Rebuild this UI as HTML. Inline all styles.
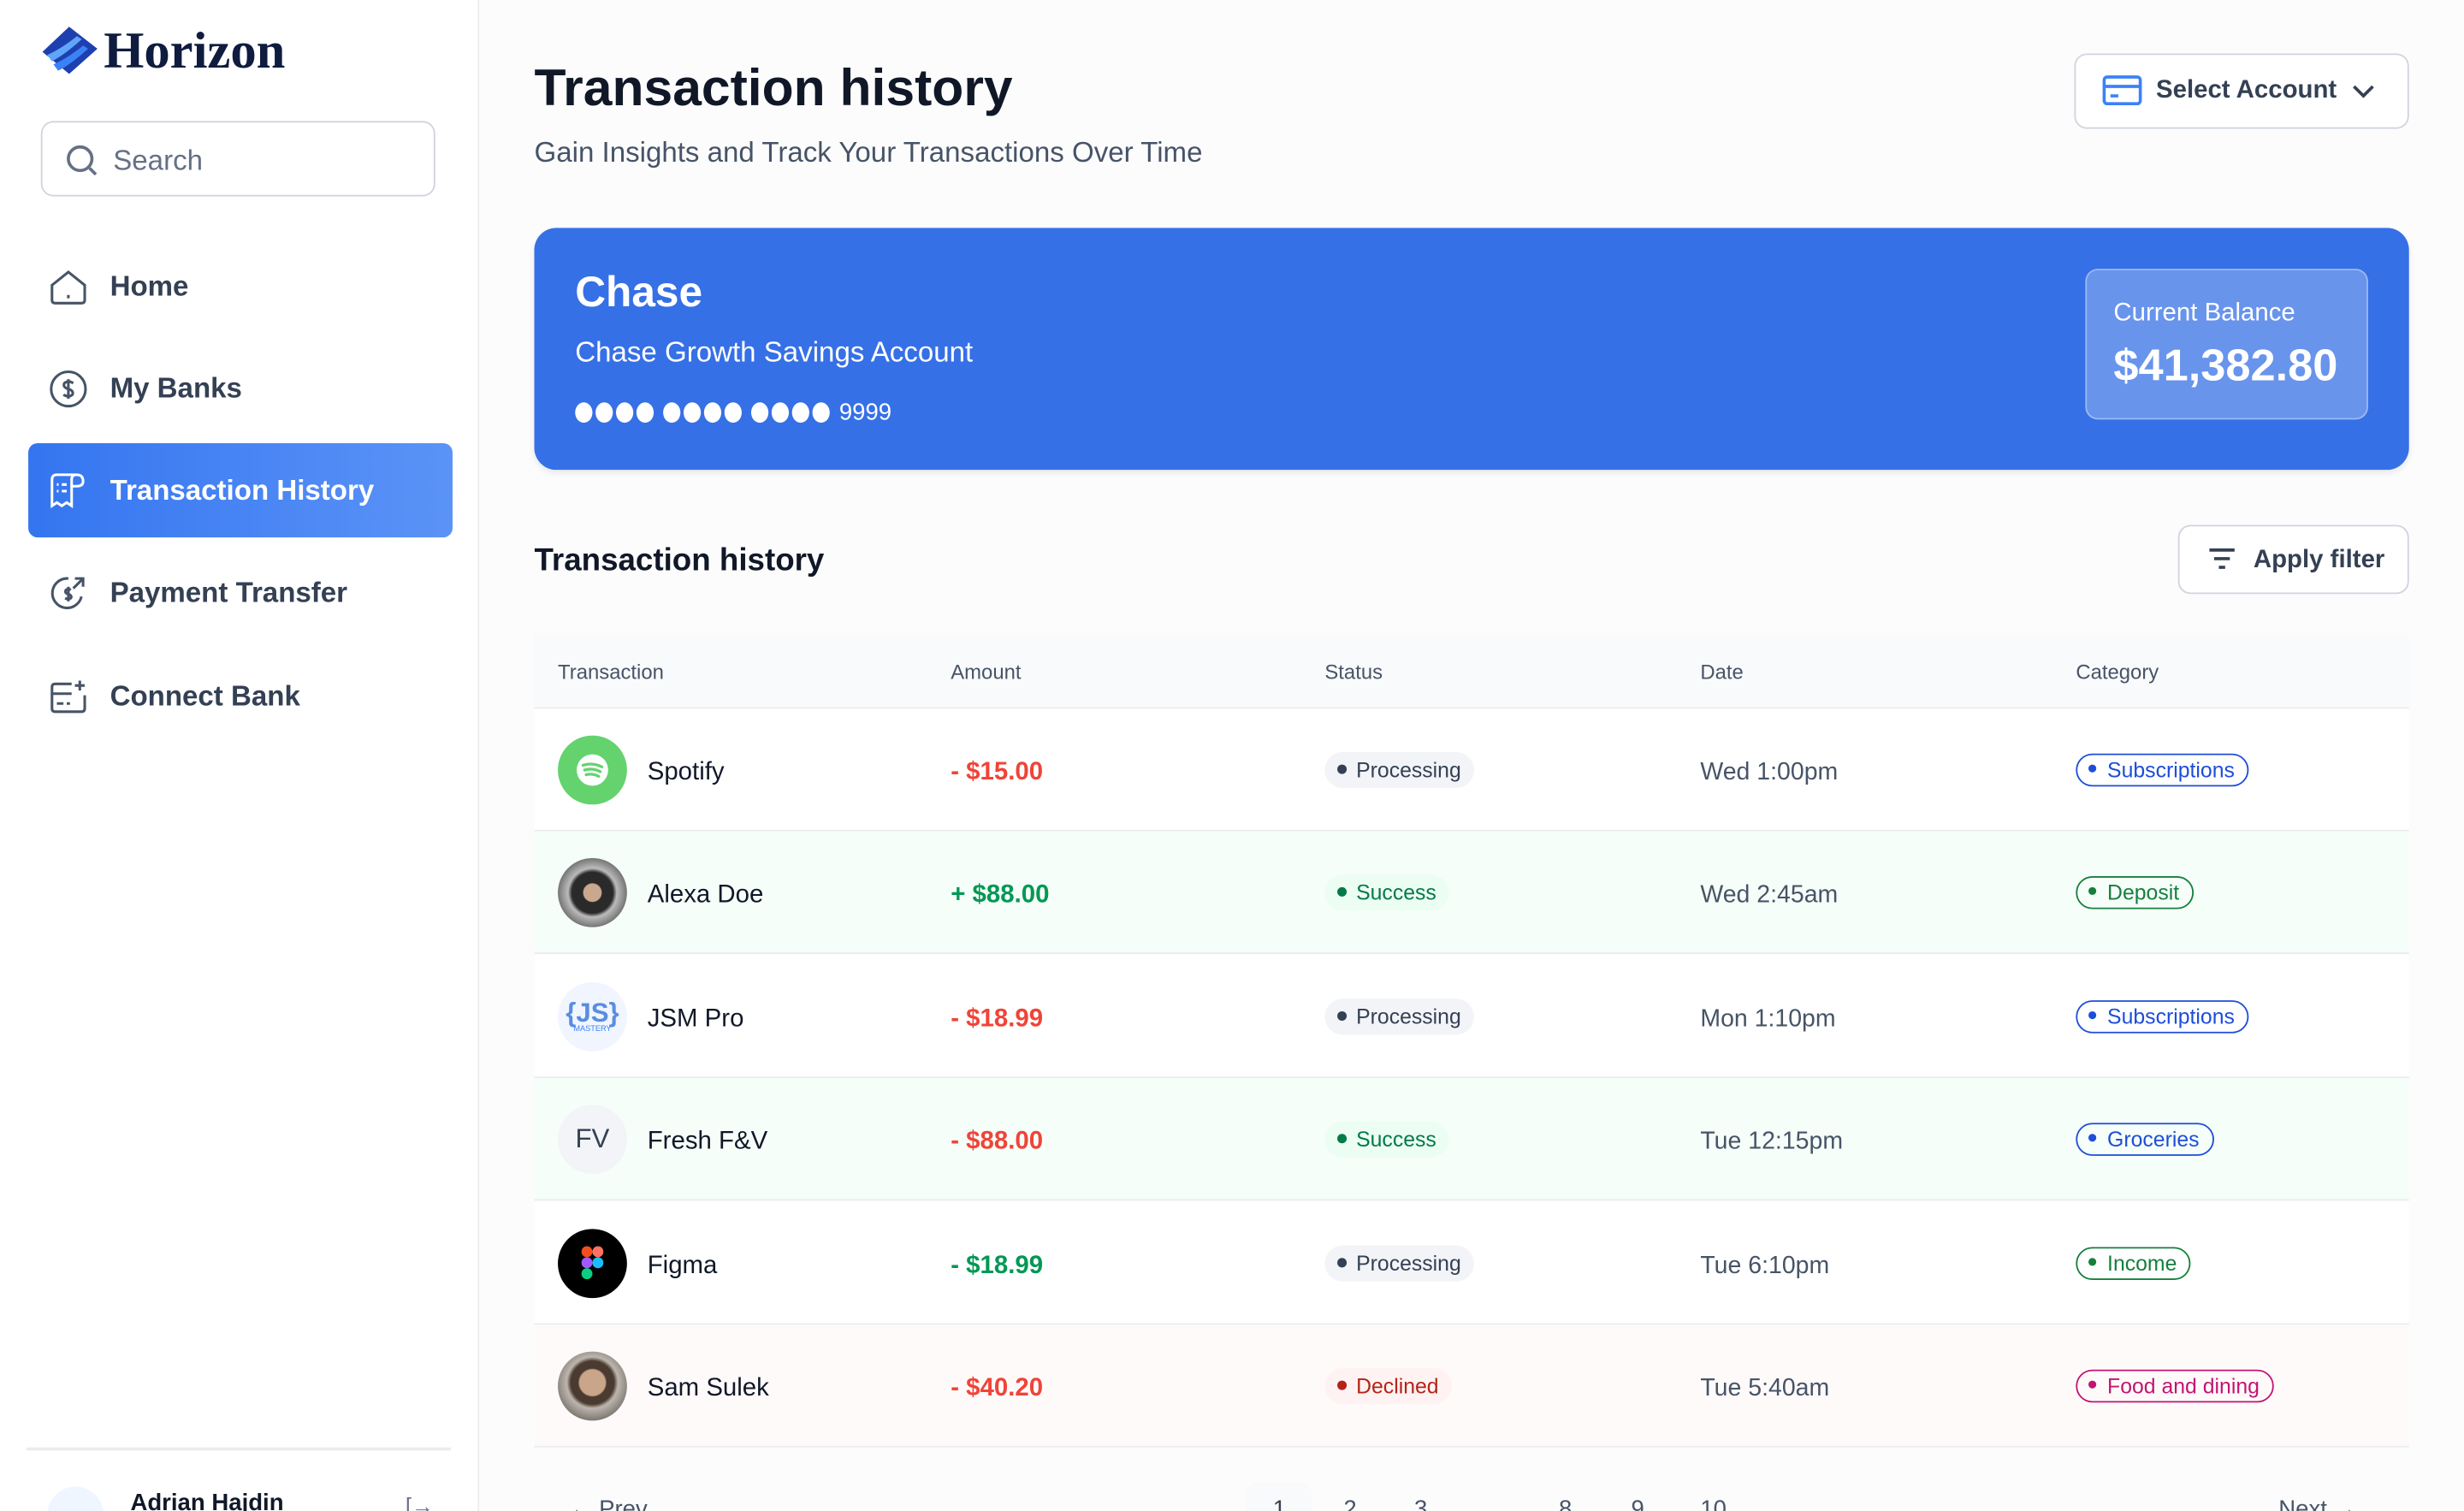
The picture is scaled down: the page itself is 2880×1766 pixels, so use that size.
<!DOCTYPE html>
<html><head><meta charset="utf-8"><style>
*{box-sizing:border-box;margin:0;padding:0}
html,body{width:2880px;height:1766px;overflow:hidden;background:#fcfcfd}
#w{width:1568px;height:962px;transform:scale(1.836735);transform-origin:0 0;position:relative;font-family:"Liberation Sans",sans-serif;color:#101828;background:#fcfcfd}
.abs{position:absolute}
.side{left:0;top:0;width:305px;height:962px;background:#fff;border-right:1px solid #eaecf0}
.nav{position:absolute;left:18px;width:270px;height:60px;display:flex;align-items:center;padding-left:13px;font-size:18px;font-weight:bold;color:#344054}
.nav svg{margin-right:14px}
.th{position:absolute;top:420px;font-size:13px;color:#475467}
.row{position:absolute;left:340px;width:1193px;height:78px;border-bottom:1.5px solid #eaecf0}
.row>*{position:absolute;top:50%;transform:translateY(-50%)}
.row>.nm,.row>.am,.row>.dt{margin-top:2px}
.av{left:15px;width:44px;height:44px;border-radius:50%;display:flex;align-items:center;justify-content:center}
.nm{left:72px;font-size:16px;color:#101828}
.am{left:265px;font-size:16px;font-weight:bold}
.st{left:503px;font-size:13.5px;padding:4px 8px 4px 20px;border-radius:12px}
.st:before{content:"";position:absolute;left:8px;top:50%;margin-top:-3px;width:6px;height:6px;border-radius:50%;background:currentColor}
.dt{left:742px;font-size:15.5px;color:#475467}
.cat{left:981px;font-size:13.5px;padding:2px 8px 2px 19px;border-radius:12px;border:1.5px solid}
.cat:before{content:"";position:absolute;left:7px;top:50%;margin-top:-3px;width:5px;height:5px;border-radius:50%;background:currentColor}
.red{color:#f04438}.grn{color:#039855}
.proc{background:#f2f4f7;color:#344054}.succ{background:#ecfdf3;color:#027a48}.dec{background:#fef3f2;color:#b42318}
.blue{color:#1d4ed8;border-color:#1d4ed8}.gc{color:#15803d;border-color:#15803d}.pk{color:#c11574;border-color:#c11574}
.dots{display:inline-flex;gap:2px;margin-right:6px}.dots i{width:11px;height:13px;border-radius:50%;background:#fff;display:block}
</style></head><body><div id="w">
<div class="abs side">
 <svg class="abs" style="left:25px;top:15px" width="38" height="38" viewBox="0 0 38 38"><path d="M19 2 L37 16 L19 32 L2 18Z" fill="#1e40af"/><path d="M5 20 Q14 16 24 8 L27 10 Q16 20 8 24Z" fill="#60a5fa"/><path d="M9 26 Q18 22 28 14 L31 16 Q20 26 12 30Z" fill="#3b82f6"/></svg>
 <div class="abs" style="left:66px;top:15px;font-family:'Liberation Serif',serif;font-weight:bold;font-size:33px;color:#0f1c3f">Horizon</div>
 <div class="abs" style="left:26px;top:77px;width:251px;height:48px;border:1.5px solid #d0d5dd;border-radius:8px"></div>
 <svg class="abs" style="left:41px;top:91px" width="22" height="22" viewBox="0 0 22 22" fill="none" stroke="#667085" stroke-width="2"><circle cx="10" cy="10" r="7.5"/><path d="M16 16 L20 20"/></svg>
 <div class="abs" style="left:72px;top:92px;font-size:18px;color:#667085">Search</div>
 <div class="nav" style="top:152px"><svg width="25" height="25" viewBox="0 0 24 24" fill="none" stroke="#475467" stroke-width="1.6"><path d="M2 11 L12 3 L22 11 V20 Q22 22 20 22 H4 Q2 22 2 20Z"/><path d="M12 17v2"/></svg>Home</div>
 <div class="nav" style="top:217px"><svg width="25" height="25" viewBox="0 0 24 24" fill="none" stroke="#475467" stroke-width="1.6"><circle cx="12" cy="12" r="10.5"/><path d="M15 8.5Q12 6.5 9.5 8.5Q8.5 11 12 12Q15.5 13 14.5 15.5Q12 17.5 9 15.5M12 6v12"/></svg>My Banks</div>
 <div class="nav" style="top:282px;background:linear-gradient(90deg,#3475f0,#5b93f7);color:#fff;border-radius:6px"><svg width="25" height="25" viewBox="0 0 24 24" fill="none" stroke="#fff" stroke-width="1.6"><path d="M17 2H5Q2 2 2 5V21L5 19L8 21L11 19L14 21V5Q14 2 17 2Q21 2 21 6Q21 9 17 9H14"/><path d="M5 8h1M8 8h3M5 12h1M8 12h3"/></svg>Transaction History</div>
 <div class="nav" style="top:347px"><svg width="25" height="25" viewBox="0 0 24 24" fill="none" stroke="#475467" stroke-width="1.6"><path d="M20 14A9 9 0 1 1 12 3"/><path d="M16 3h5v5M21 3l-6 6"/><path d="M13.5 10Q12 9 10.5 10Q9.5 12 12 12.5Q14.5 13.5 13.5 15Q12 16 10 15M12 8v9"/></svg>Payment Transfer</div>
 <div class="nav" style="top:413px"><svg width="25" height="25" viewBox="0 0 24 24" fill="none" stroke="#475467" stroke-width="1.6"><path d="M14 4H4Q2 4 2 6V19Q2 21 4 21H20Q22 21 22 19V11"/><path d="M2 10h12M5 16h4M11 16h2M19 2v6M16 5h6"/></svg>Connect Bank</div>
 <div class="abs" style="left:17px;top:921px;width:270px;height:2px;background:#eaecf0"></div>
 <div class="abs" style="left:30px;top:946px;width:36px;height:36px;border-radius:50%;background:#eff6ff"></div>
 <div class="abs" style="left:83px;top:948px;font-size:15px;font-weight:bold;color:#101828">Adrian Hajdin</div>
 <div class="abs" style="left:258px;top:950px;font-size:14px;color:#667085">[→</div>
</div>
<div class="abs" style="left:340px;top:37px;font-size:33px;font-weight:bold;color:#101828">Transaction history</div>
<div class="abs" style="left:340px;top:87px;font-size:18px;color:#475467">Gain Insights and Track Your Transactions Over Time</div>
<div class="abs" style="left:1320px;top:34px;width:213px;height:48px;border:1.5px solid #d0d5dd;border-radius:8px;background:#fff"></div>
<svg class="abs" style="left:1338px;top:47px" width="25" height="21" viewBox="0 0 25 21" fill="none" stroke="#3b82f6" stroke-width="2"><rect x="1" y="2" width="23" height="17" rx="2"/><path d="M1 8h23M5 14h5"/></svg>
<div class="abs" style="left:1372px;top:49px;font-size:16px;font-weight:bold;color:#344054">Select Account</div>
<svg class="abs" style="left:1497px;top:53px" width="14" height="10" viewBox="0 0 14 10" fill="none" stroke="#344054" stroke-width="2"><path d="M1 2l6 6 6-6"/></svg>
<div class="abs" style="left:340px;top:145px;width:1193px;height:154px;background:#3670e6;border-radius:14px;box-shadow:0 2px 4px rgba(0,0,0,.08)"></div>
<div class="abs" style="left:366px;top:171px;font-size:27px;font-weight:bold;color:#fff">Chase</div>
<div class="abs" style="left:366px;top:214px;font-size:18px;color:#fff">Chase Growth Savings Account</div>
<div class="abs" style="left:366px;top:254px;font-size:15px;color:#fff;display:flex;align-items:center"><span class="dots"><i></i><i></i><i></i><i></i></span><span class="dots"><i></i><i></i><i></i><i></i></span><span class="dots"><i></i><i></i><i></i><i></i></span>9999</div>
<div class="abs" style="left:1327px;top:171px;width:180px;height:96px;border:1px solid rgba(255,255,255,.35);background:rgba(255,255,255,.25);border-radius:8px"></div>
<div class="abs" style="left:1345px;top:191px;font-size:16px;color:#fff">Current Balance</div>
<div class="abs" style="left:1345px;top:217px;font-size:28.5px;font-weight:bold;color:#fff">$41,382.80</div>
<div class="abs" style="left:340px;top:346px;font-size:20px;font-weight:bold;color:#101828">Transaction history</div>
<div class="abs" style="left:1386px;top:334px;width:147px;height:44px;border:1.5px solid #d0d5dd;border-radius:8px;background:#fff"></div>
<svg class="abs" style="left:1405px;top:348px" width="18" height="15" viewBox="0 0 18 15" fill="none" stroke="#344054" stroke-width="2"><path d="M1 2h16M4 7.5h10M7 13h4"/></svg>
<div class="abs" style="left:1434px;top:348px;font-size:16px;font-weight:bold;color:#344054">Apply filter</div>
<div class="abs" style="left:340px;top:404px;width:1193px;height:47px;background:#f9fafb;border-bottom:1.5px solid #eaecf0"></div>
<div class="th" style="left:355px">Transaction</div><div class="th" style="left:605px">Amount</div><div class="th" style="left:843px">Status</div><div class="th" style="left:1082px">Date</div><div class="th" style="left:1321px">Category</div>

<div class="row" style="top:451px;background:#fff"><div class="av" style="background:#64d36e"><svg width="22" height="22" viewBox="0 0 22 22"><circle cx="11" cy="11" r="10" fill="#fff"/><path d="M5 8Q11 6 17 9M6 11Q11 9.5 16 12M7 14Q11 13 15 15" stroke="#64d36e" stroke-width="1.8" fill="none" stroke-linecap="round"/></svg></div><div class="nm">Spotify</div><div class="am red">- $15.00</div><div class="st proc">Processing</div><div class="dt">Wed 1:00pm</div><div class="cat blue">Subscriptions</div></div>
<div class="row" style="top:529px;background:#f6fef9"><div class="av" style="background:radial-gradient(circle at 50% 50%,#caa890 0 18%,#2a2a2a 20% 42%,#bbb 50%,#777 70%)"></div><div class="nm">Alexa Doe</div><div class="am grn">+ $88.00</div><div class="st succ">Success</div><div class="dt">Wed 2:45am</div><div class="cat gc">Deposit</div></div>
<div class="row" style="top:608px;background:#fff"><div class="av" style="background:#f0f5ff;flex-direction:column;line-height:1"><span style="font-size:17px;font-weight:bold;color:#5a8de0">{JS}</span><span style="font-size:5px;color:#3b82f6">MASTERY</span></div><div class="nm">JSM Pro</div><div class="am red">- $18.99</div><div class="st proc">Processing</div><div class="dt">Mon 1:10pm</div><div class="cat blue">Subscriptions</div></div>
<div class="row" style="top:686px;background:#f6fef9"><div class="av" style="background:#f2f4f7;font-size:17px;color:#344054">FV</div><div class="nm">Fresh F&amp;V</div><div class="am red">- $88.00</div><div class="st succ">Success</div><div class="dt">Tue 12:15pm</div><div class="cat blue">Groceries</div></div>
<div class="row" style="top:765px;background:#fff"><div class="av" style="background:#000"><svg width="14" height="22" viewBox="0 0 14 22"><rect x="0" y="0" width="7" height="7" rx="3.5" fill="#f24e1e"/><rect x="7" y="0" width="7" height="7" rx="3.5" fill="#ff7262"/><rect x="0" y="7" width="7" height="7" rx="3.5" fill="#a259ff"/><circle cx="10.5" cy="10.5" r="3.5" fill="#1abcfe"/><rect x="0" y="14" width="7" height="7" rx="3.5" fill="#0acf83"/></svg></div><div class="nm">Figma</div><div class="am grn">- $18.99</div><div class="st proc">Processing</div><div class="dt">Tue 6:10pm</div><div class="cat gc">Income</div></div>
<div class="row" style="top:843px;background:#fffafa"><div class="av" style="background:radial-gradient(circle at 50% 45%,#c9a58a 0 25%,#4a3a30 28% 42%,#bdb6ae 50%,#7a746e 75%)"></div><div class="nm">Sam Sulek</div><div class="am red">- $40.20</div><div class="st dec">Declined</div><div class="dt">Tue 5:40am</div><div class="cat pk">Food and dining</div></div>

<div class="abs" style="left:793px;top:943px;width:42px;height:40px;border-radius:8px;background:#f9fafb"></div>
<div class="abs" style="left:362px;top:952px;font-size:15px;color:#475467">← Prev</div>
<div class="abs" style="left:810px;top:952px;font-size:15px;color:#344054">1</div>
<div class="abs" style="left:855px;top:952px;font-size:15px;color:#475467">2</div>
<div class="abs" style="left:900px;top:952px;font-size:15px;color:#475467">3</div>
<div class="abs" style="left:945px;top:952px;font-size:15px;color:#475467">...</div>
<div class="abs" style="left:992px;top:952px;font-size:15px;color:#475467">8</div>
<div class="abs" style="left:1038px;top:952px;font-size:15px;color:#475467">9</div>
<div class="abs" style="left:1082px;top:952px;font-size:15px;color:#475467">10</div>
<div class="abs" style="left:1450px;top:952px;font-size:15px;color:#475467">Next →</div>
</div></body></html>
